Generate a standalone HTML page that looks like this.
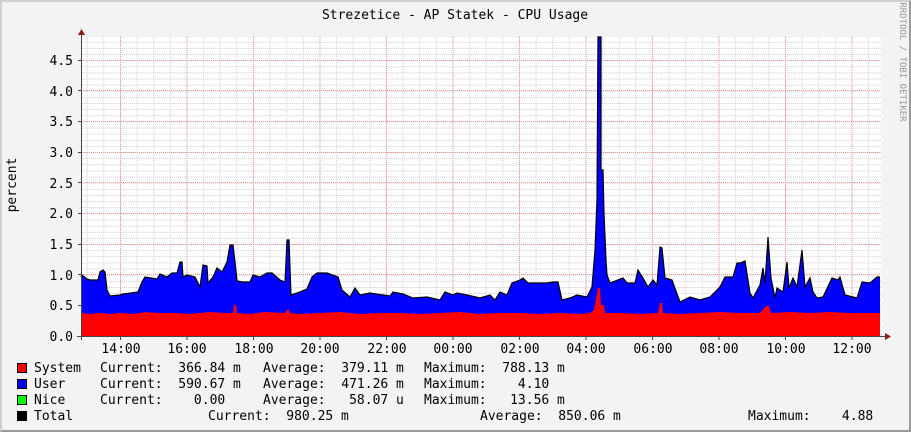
<!DOCTYPE html>
<html><head><meta charset="utf-8"><style>
html,body{margin:0;padding:0;}
body{width:911px;height:432px;position:relative;background:#f3f3f3;overflow:hidden;font-family:"DejaVu Sans Mono","Liberation Mono",monospace;font-size:13px;color:#000;}
.frame{position:absolute;left:0;top:0;width:911px;height:432px;box-sizing:border-box;border-top:2px solid #d0d0d0;border-left:2px solid #d0d0d0;border-right:2px solid #9a9a9a;border-bottom:2px solid #9a9a9a;}
.t{position:absolute;white-space:pre;line-height:13px;}
.box{position:absolute;width:10px;height:10px;border:1px solid #000;box-sizing:border-box;}
</style></head><body>
<svg width="911" height="432" style="position:absolute;left:0;top:0" xmlns="http://www.w3.org/2000/svg">
<defs>
<pattern id="mg" x="120" y="336" width="16.625" height="6.13" patternUnits="userSpaceOnUse">
<line x1="0.5" y1="0" x2="0.5" y2="6.13" stroke="#c8c8c8" stroke-width="1" stroke-dasharray="1,1"/>
<line x1="0" y1="0.5" x2="16.625" y2="0.5" stroke="#c8c8c8" stroke-width="1" stroke-dasharray="1,1"/>
</pattern>
</defs>
<rect x="81" y="36" width="800" height="300" fill="#fff"/>
<rect x="81" y="36" width="800" height="300" fill="url(#mg)"/>
<g stroke="#f09898" stroke-width="1" stroke-dasharray="1,1" fill="none">
<path d="M120.5 36V336M187 36V336M253.5 36V336M320 36V336M386.5 36V336M453 36V336M519.5 36V336M586 36V336M652.5 36V336M719 36V336M785.5 36V336M852 36V336"/>
<path d="M81 305.5H881M81 274.5H881M81 244.5H881M81 213.5H881M81 152.5H881M81 121.5H881M81 90.5H881M81 60.5H881M81 182.5H881"/>
</g>
<polygon fill="#0000ff" points="81,336 81,277 82,275 87,279 90,280 98,280 100,272 103,270 105,272 107,290 110,296 120,295 123,294 138,292 142,282 145,277 157,279 160,274 167,277 172,273 177,273 180,262 182,262 183,277 187,275 195,277 200,287 203,265 207,266 208,283 213,277 217,268 222,272 227,262 230,245 233,245 235,262 237,281 243,282 250,282 253,275 260,277 267,273 272,273 280,280 285,282 287,240 289,240 291,295 297,293 307,289 312,277 317,273 327,273 338,277 342,290 350,297 355,288 360,295 370,293 390,296 393,292 403,294 413,298 427,297 440,300 445,292 453,295 457,293 467,295 480,298 490,295 495,300 500,292 507,295 512,283 520,280 523,278 528,283 547,283 553,282 558,282 562,300 570,298 577,295 587,297 592,287 595,250 597,200 598,37 601,37 601,170 603,170 604,213 606,260 607,275 610,283 623,278 627,283 635,283 638,270 643,278 648,287 653,280 657,285 660,247 662,248 665,278 672,280 680,302 690,297 700,300 710,297 720,287 725,277 733,277 737,263 740,263 745,261 750,293 753,298 760,285 763,268 765,283 768,237 771,278 775,298 777,288 783,292 787,262 789,288 793,278 797,287 802,250 805,287 810,278 813,292 817,298 823,297 832,278 838,280 840,277 845,295 857,298 862,282 870,283 877,277 880,277 880,336"/>
<polyline fill="none" stroke="#000" stroke-width="1.2" points="81,277 82,275 87,279 90,280 98,280 100,272 103,270 105,272 107,290 110,296 120,295 123,294 138,292 142,282 145,277 157,279 160,274 167,277 172,273 177,273 180,262 182,262 183,277 187,275 195,277 200,287 203,265 207,266 208,283 213,277 217,268 222,272 227,262 230,245 233,245 235,262 237,281 243,282 250,282 253,275 260,277 267,273 272,273 280,280 285,282 287,240 289,240 291,295 297,293 307,289 312,277 317,273 327,273 338,277 342,290 350,297 355,288 360,295 370,293 390,296 393,292 403,294 413,298 427,297 440,300 445,292 453,295 457,293 467,295 480,298 490,295 495,300 500,292 507,295 512,283 520,280 523,278 528,283 547,283 553,282 558,282 562,300 570,298 577,295 587,297 592,287 595,250 597,200 598,37 601,37 601,170 603,170 604,213 606,260 607,275 610,283 623,278 627,283 635,283 638,270 643,278 648,287 653,280 657,285 660,247 662,248 665,278 672,280 680,302 690,297 700,300 710,297 720,287 725,277 733,277 737,263 740,263 745,261 750,293 753,298 760,285 763,268 765,283 768,237 771,278 775,298 777,288 783,292 787,262 789,288 793,278 797,287 802,250 805,287 810,278 813,292 817,298 823,297 832,278 838,280 840,277 845,295 857,298 862,282 870,283 877,277 880,277"/>
<polygon fill="#ff0000" points="81,336 81,313 90,314 100,313 110,314 120,313 135,314 145,312 160,313 175,313 190,314 200,313 210,312 225,313 233,313 234,305 236,305 237,313 250,314 265,312 285,313 287,310 289,310 290,313 300,314 320,313 340,312 360,314 380,313 400,313 420,314 440,313 460,312 480,314 500,313 520,313 540,314 560,313 580,314 590,313 594,310 598,288 600,288 601,305 604,305 605,313 620,313 640,314 658,313 660,303 662,303 663,313 680,314 700,313 720,312 740,313 760,313 766,306 769,306 771,313 790,312 810,313 830,312 850,313 860,313 880,313 880,336"/>
<g stroke="#444" stroke-width="1">
<line x1="77" y1="336.5" x2="886" y2="336.5"/>
<line x1="81.5" y1="32" x2="81.5" y2="340"/>
<path d="M120.5 336V340M187 336V340M253.5 336V340M320 336V340M386.5 336V340M453 336V340M519.5 336V340M586 336V340M652.5 336V340M719 336V340M785.5 336V340M852 336V340"/>
<path d="M78 305.5H81M78 274.5H81M78 244.5H81M78 213.5H81M78 182.5H81M78 152.5H81M78 121.5H81M78 90.5H81M78 60.5H81"/>
</g>
<polygon fill="#8b1a1a" points="78,35 85,35 81.5,29"/>
<polygon fill="#8b1a1a" points="885,333 885,340 891,336.5"/>
<g font-family="DejaVu Sans Mono, Liberation Mono, monospace" font-size="13" text-anchor="end" fill="#000">
<text x="73" y="341">0.0</text><text x="73" y="310">0.5</text><text x="73" y="280">1.0</text><text x="73" y="249">1.5</text><text x="73" y="218">2.0</text><text x="73" y="188">2.5</text><text x="73" y="157">3.0</text><text x="73" y="126">3.5</text><text x="73" y="96">4.0</text><text x="73" y="65">4.5</text>
</g>
<g font-family="DejaVu Sans Mono, Liberation Mono, monospace" font-size="13" text-anchor="middle" fill="#000">
<text x="121" y="353">14:00</text><text x="187" y="353">16:00</text><text x="254" y="353">18:00</text><text x="320" y="353">20:00</text><text x="387" y="353">22:00</text><text x="453" y="353">00:00</text><text x="520" y="353">02:00</text><text x="586" y="353">04:00</text><text x="653" y="353">06:00</text><text x="719" y="353">08:00</text><text x="786" y="353">10:00</text><text x="852" y="353">12:00</text>
<text x="455" y="19">Strezetice - AP Statek - CPU Usage</text>
<text x="0" y="0" transform="translate(16,185) rotate(-90)">percent</text>
<text x="0" y="0" font-size="9" fill="#999" transform="translate(900,62) rotate(90)">RRDTOOL / TOBI OETIKER</text>
</g>
</svg>
<div class="box" style="left:17px;top:363px;background:#f00"></div>
<div class="box" style="left:17px;top:379px;background:#00f"></div>
<div class="box" style="left:17px;top:395px;background:#0f0"></div>
<div class="box" style="left:17px;top:411px;background:#000"></div>
<div class="t" style="left:34px;top:362px">System</div><div class="t" style="left:100px;top:362px">Current:  366.84 m</div><div class="t" style="left:263px;top:362px">Average:  379.11 m</div><div class="t" style="left:424px;top:362px">Maximum:  788.13 m</div>
<div class="t" style="left:34px;top:378px">User</div><div class="t" style="left:100px;top:378px">Current:  590.67 m</div><div class="t" style="left:263px;top:378px">Average:  471.26 m</div><div class="t" style="left:424px;top:378px">Maximum:    4.10</div>
<div class="t" style="left:34px;top:394px">Nice</div><div class="t" style="left:100px;top:394px">Current:    0.00</div><div class="t" style="left:263px;top:394px">Average:   58.07 u</div><div class="t" style="left:424px;top:394px">Maximum:   13.56 m</div>
<div class="t" style="left:34px;top:410px">Total</div><div class="t" style="left:208px;top:410px">Current:  980.25 m</div><div class="t" style="left:480px;top:410px">Average:  850.06 m</div><div class="t" style="left:748px;top:410px">Maximum:    4.88</div>
<div class="frame"></div>
</body></html>
